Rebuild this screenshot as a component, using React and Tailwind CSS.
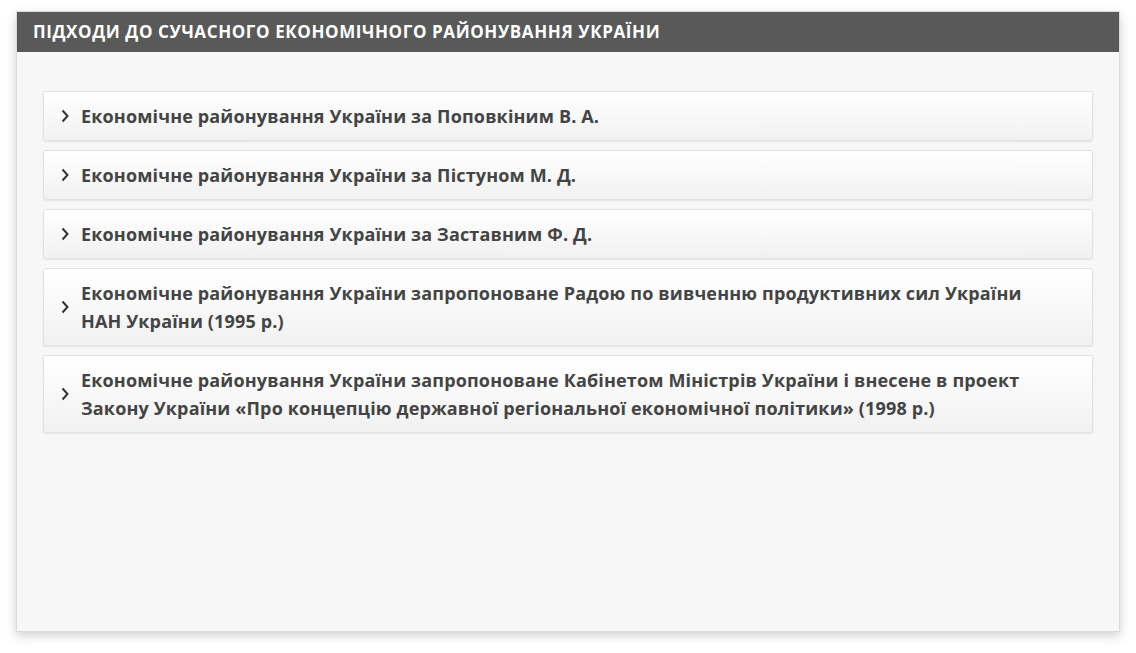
const items = [
  "Економічне районування України за Поповкіним В. А.",
  "Економічне районування України за Пістуном М. Д.",
  "Економічне районування України за Заставним Ф. Д.",
  "Економічне районування України запропоноване Радою по вивченню продуктивних сил України НАН України (1995 р.)",
  "Економічне районування України запропоноване Кабінетом Міністрів України і внесене в проект Закону України «Про концепцію державної регіональної економічної політики» (1998 р.)",
];

function Chevron() {
  return (
    <svg width="8" height="14" viewBox="0 0 8 14" className="shrink-0">
      <path d="M1.5 1.5 L6.5 7 L1.5 12.5" fill="none" stroke="#333" strokeWidth="2" />
    </svg>
  );
}

export default function App() {
  return (
    <div className="min-h-screen bg-white pt-[11px] pl-[16px] pr-[16px] font-['Open_Sans',sans-serif]">
      <div className="w-[1104px] h-[621px] bg-[#f7f7f7] border border-[#dcdcdc] shadow-[0_4px_10px_rgba(0,0,0,0.18)] flex flex-col">
        <div className="h-[40px] bg-[#595959] flex items-center px-[16px] text-white font-bold text-[17px] tracking-[0.6px]">
          ПІДХОДИ ДО СУЧАСНОГО ЕКОНОМІЧНОГО РАЙОНУВАННЯ УКРАЇНИ
        </div>
        <div className="px-[26px] pt-[39px] flex flex-col gap-[9px]">
          {items.map((t) => (
            <div
              key={t}
              className="flex items-center gap-[12px] pl-[17px] pr-[60px] py-[10px] rounded-[3px] border border-[#e2e2e2] bg-gradient-to-b from-white to-[#f1f1f1] shadow-[0_1px_2px_rgba(0,0,0,0.08)]"
            >
              <Chevron />
              <div className="text-[18px] leading-[28px] font-bold tracking-[0.15px] text-[#444]">{t}</div>
            </div>
          ))}
        </div>
      </div>
    </div>
  );
}
